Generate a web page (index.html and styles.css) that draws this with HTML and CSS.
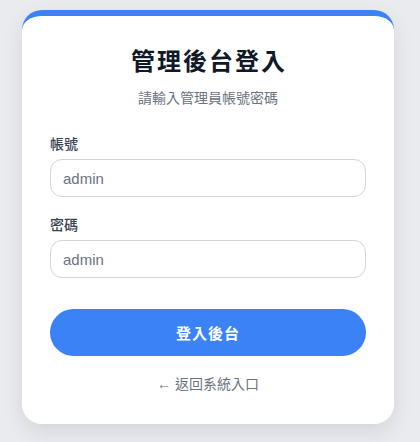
FILE: index.html
```html
<!DOCTYPE html>
<html lang="zh-Hant">
<head>
<meta charset="utf-8">
<title>管理後台登入</title>
<link rel="stylesheet" href="styles.css">
</head>
<body>
<div class="card">
  <h1 class="title">管理後台登入</h1>
  <p class="subtitle">請輸入管理員帳號密碼</p>
  <form class="form">
    <label class="label" for="user">帳號</label>
    <input class="input" id="user" type="text" value="admin">
    <label class="label label-gap" for="pass">密碼</label>
    <input class="input" id="pass" type="text" value="admin">
    <button class="btn" type="button">登入後台</button>
  </form>
  <a class="back" href="#">← 返回系統入口</a>
</div>
</body>
</html>
```
FILE: styles.css
```css
* { box-sizing: border-box; }
html, body { margin: 0; }
body {
  background: #eaebef;
  padding: 10px 26px 18px 22px;
  font-family: "Liberation Sans", "Noto Sans CJK TC", sans-serif;
  height: 442px;
}
.card {
  width: 372px;
  background: #fff;
  border-top: 6px solid #3b82f6;
  border-radius: 20px;
  padding: 28px 28px 30px;
  box-shadow: 0 8px 20px rgba(30, 40, 60, 0.10);
  display: flex;
  flex-direction: column;
}
.title {
  margin: 0;
  text-align: center;
  font-size: 24px;
  line-height: 36px;
  font-weight: 700;
  color: #111827;
  letter-spacing: 2px;
  padding-left: 2px;
}
.subtitle {
  margin: 8px 0 0;
  text-align: center;
  font-size: 14px;
  line-height: 20px;
  color: #6b7280;
}
.form {
  display: flex;
  flex-direction: column;
  margin-top: 26px;
}
.label {
  font-size: 14px;
  line-height: 20px;
  color: #374151;
  font-weight: 500;
}
.label-gap { margin-top: 18px; }
.input {
  margin-top: 5px;
  height: 38px;
  border: 1px solid #d1d5db;
  border-radius: 12px;
  padding: 0 12px;
  font-family: inherit;
  font-size: 15px;
  color: #6b7280;
  background: #fff;
  outline: none;
}
.btn {
  margin-top: 31px;
  height: 47px;
  border: none;
  border-radius: 999px;
  background: #3b82f6;
  color: #fff;
  font-family: inherit;
  font-size: 15px;
  font-weight: 700;
  letter-spacing: 1px;
}
.back {
  margin-top: 18px;
  text-align: center;
  font-size: 14px;
  line-height: 20px;
  color: #6b7280;
  text-decoration: none;
}
```
